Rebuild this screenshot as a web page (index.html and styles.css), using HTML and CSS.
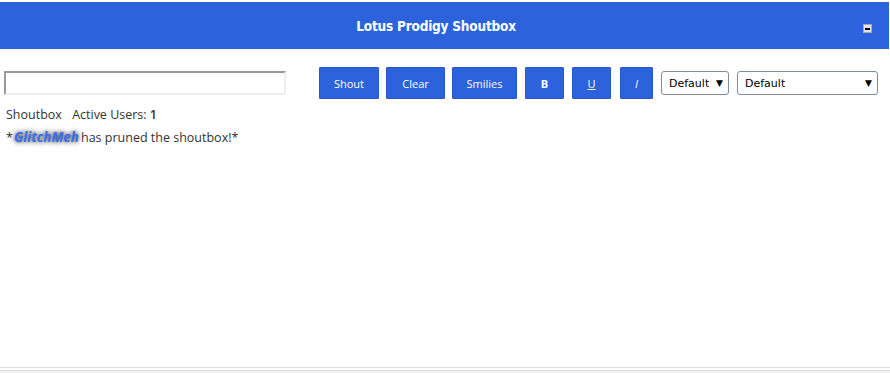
FILE: index.html
```html
<!DOCTYPE html>
<html lang="en">
<head>
  <meta charset="UTF-8" />
  <title>Lotus Prodigy Shoutbox</title>
  <link rel="stylesheet" href="styles.css">
</head>
<body>
  <div class="shoutbox">
    <div class="header">
      <h2>Lotus Prodigy Shoutbox</h2>
      <span class="collapse"><span></span></span>
    </div>

    <div class="body">
      <div class="toolbar">
        <input type="text" class="shout-input" />
        <div class="buttons">
          <button class="btn w-shout">Shout</button>
          <button class="btn w-clear">Clear</button>
          <button class="btn w-smilies">Smilies</button>
          <button class="btn w-b"><b>B</b></button>
          <button class="btn w-u"><u>U</u></button>
          <button class="btn w-i"><i>I</i></button>
          <div class="select small"><span>Default</span><span class="arrow">&#9660;</span></div>
          <div class="select large"><span>Default</span><span class="arrow">&#9660;</span></div>
        </div>
      </div>

      <div class="status">Shoutbox <span class="users">Active Users: <strong>1</strong></span></div>
      <div class="message">*<span class="user">GlitchMeh</span>has pruned the shoutbox!*</div>
    </div>

    <div class="footer"></div>
  </div>
</body>
</html>
```

FILE: styles.css
```css
body {
  margin: 0;
  padding-top: 2px;
  background: #fff;
  font-family: "Open Sans", Arial, sans-serif;
  color: #333;
}
.shoutbox {
  width: 890px;
}
.header {
  box-sizing: border-box;
  height: 47px;
  width: 889px;
  padding-right: 17px;
  background-color: #2c63dd;
  display: flex;
  align-items: center;
  justify-content: center;
  position: relative;
}
.header h2 {
  margin: 0;
  color: #fff;
  font-family: "DejaVu Sans Condensed", "DejaVu Sans", sans-serif;
  font-stretch: condensed;
  font-size: 13.5px;
  font-weight: bold;
  letter-spacing: -0.2px;
}
.collapse {
  position: absolute;
  left: 863px;
  top: 22px;
  width: 7px;
  height: 7px;
  background: #e4e4e4;
  border: 1px solid #a8a8a8;
  display: flex;
  align-items: center;
  justify-content: center;
}
.collapse span {
  width: 5px;
  height: 2px;
  background: #000;
}
.body {
  height: 318px;
  border-bottom: 1px solid #dcdcdc;
}
.toolbar {
  display: flex;
  align-items: center;
  padding: 18px 0 0 4px;
}
.shout-input {
  box-sizing: border-box;
  width: 282px;
  height: 24px;
  margin: 0;
  border-style: solid;
  border-width: 2px;
  border-color: #999 #eee #eee #999;
  background: #fff;
}
.buttons {
  display: flex;
  align-items: center;
  margin-left: 33px;
}
.btn {
  box-sizing: border-box;
  height: 32px;
  margin: 0 7px 0 0;
  padding: 0;
  background-color: #2c63dd;
  border: 1px solid #2558c6;
  border-radius: 1px;
  color: #fff;
  font-family: "Open Sans", Arial, sans-serif;
  font-size: 11px;
}
.w-shout { width: 60px; }
.w-clear { width: 59px; }
.w-smilies { width: 65px; margin-right: 8px; }
.w-b { width: 39px; margin-right: 8px; }
.w-u { width: 39px; margin-right: 9px; }
.w-i { width: 33px; margin-right: 8px; }
.select {
  box-sizing: border-box;
  height: 24px;
  border: 1px solid #7f8c99;
  border-radius: 3px;
  display: flex;
  align-items: center;
  justify-content: space-between;
  padding: 0 5px 0 7px;
  font-family: "DejaVu Sans", Tahoma, sans-serif;
  font-size: 11px;
  color: #000;
  margin-right: 8px;
}
.select .arrow {
  font-size: 9px;
}
.select.small { width: 68px; }
.select.large { width: 141px; }
.status {
  margin: 7px 0 0 6px;
  font-size: 12.5px;
  line-height: 18px;
}
.users {
  margin-left: 7px;
}
.users strong {
  font-weight: 600;
}
.message {
  margin: 4px 0 0 6px;
  font-size: 12.5px;
  line-height: 18px;
}
.user {
  margin: 0 2px 0 1px;
  color: #3a6fe8;
  font-size: 13.5px;
  font-weight: bold;
  font-style: italic;
  text-shadow: 0 0 5px #111;
}
.footer {
  height: 2px;
  margin-top: 2px;
  border-top: 1px solid #dcdcdc;
  background: #f3f3f3;
}
```
